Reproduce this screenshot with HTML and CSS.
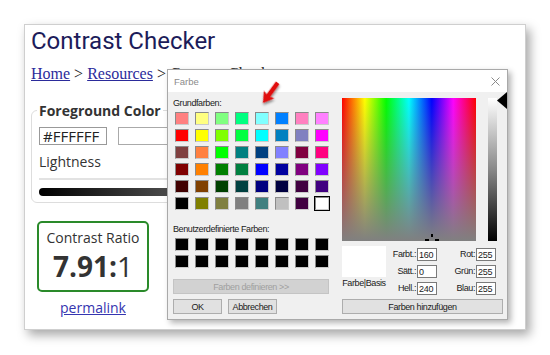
FILE: index.html
```html
<!DOCTYPE html>
<html lang="de">

<head>
  <meta charset="UTF-8" />
  <meta name="viewport" content="width=device-width, initial-scale=1.0" />
  <title>Contrast Checker</title>
  <link rel="stylesheet" href="styles.css">
</head>

<body>

  <div class="page">
    <h1>Contrast Checker</h1>
    <p class="crumbs"><a href="#">Home</a> &gt; <a href="#">Resources</a> &gt; Contrast Checker</p>

    <fieldset class="color-set">
      <legend>Foreground Color</legend>
      <div class="fields-row">
        <input type="text" class="hex-input" value="#FFFFFF" />
        <input type="text" class="picker-input" value="" />
      </div>
      <div class="lightness-label">Lightness</div>
      <div class="track"></div>
      <div class="lightness-bar"></div>
    </fieldset>

    <div class="ratio-box">
      <div class="ratio-title">Contrast Ratio</div>
      <div class="ratio-value"><b>7.91:</b>1</div>
    </div>
    <div class="permalink-row"><a href="#">permalink</a></div>

    <!-- Windows color dialog over the page -->
    <div class="dialog">
      <div class="dialog-title">
        <span>Farbe</span>
        <svg width="9" height="9" viewBox="0 0 9 9"><path d="M0.5 0.5L8.5 8.5M8.5 0.5L0.5 8.5" stroke="#8a8a8a" stroke-width="1" fill="none"/></svg>
      </div>
      <div class="dialog-body">
        <div class="dialog-left">
          <div class="dlg-label">Grundfarben:</div>
          <div class="swatches" id="basic-colors"></div>
          <div class="dlg-label custom-label">Benutzerdefinierte Farben:</div>
          <div class="swatches" id="custom-colors"></div>
          <button class="btn btn-define" disabled>Farben definieren &gt;&gt;</button>
          <div class="btn-row">
            <button class="btn btn-small">OK</button>
            <button class="btn btn-small">Abbrechen</button>
          </div>
        </div>

        <div class="dialog-right">
          <div class="spectrum-row">
            <div class="spectrum">
              <svg class="crosshair" width="16" height="10" viewBox="0 0 16 10">
                <rect x="7" y="0" width="2" height="3" fill="#000"/>
                <rect x="1" y="5" width="4" height="2" fill="#000"/>
                <rect x="11" y="5" width="4" height="2" fill="#000"/>
                <rect x="7" y="8" width="2" height="2" fill="#000"/>
              </svg>
            </div>
            <div class="lum-bar"></div>
            <svg class="lum-marker" width="10" height="17" viewBox="0 0 10 17"><path d="M0 8.5L10 0V17Z" fill="#000"/></svg>
          </div>

          <div class="values">
            <div class="preview-col">
              <div class="preview"></div>
              <div class="preview-label">Farbe|Basis</div>
            </div>
            <div class="value-grid">
              <span>Farbt.:</span><input type="text" value="160" /><span>Rot:</span><input type="text" value="255" />
              <span>Sätt.:</span><input type="text" value="0" /><span>Grün:</span><input type="text" value="255" />
              <span>Hell.:</span><input type="text" value="240" /><span>Blau:</span><input type="text" value="255" />
            </div>
          </div>

          <button class="btn btn-add">Farben hinzufügen</button>
        </div>
      </div>

      <svg class="red-arrow" width="32" height="34" viewBox="0 0 32 34">
        <defs>
          <filter id="sombra" x="-50%" y="-50%" width="200%" height="200%">
            <feDropShadow dx="1.5" dy="1.5" stdDeviation="1" flood-color="#000" flood-opacity="0.45"/>
          </filter>
        </defs>
        <g transform="translate(6,27) rotate(36)" filter="url(#sombra)">
          <path d="M0 0L-6.5 -10.5L-2.2 -9.3L-2.2 -25L2.2 -25L2.2 -9.3L6.5 -10.5Z" fill="#e01010"/>
        </g>
      </svg>
    </div>
  </div>

  <script>
    // Standard colors of the dialog
    const basicColors = [
      "#FF8080", "#FFFF80", "#80FF80", "#00FF80", "#80FFFF", "#0080FF", "#FF80C0", "#FF80FF",
      "#FF0000", "#FFFF00", "#80FF00", "#00FF40", "#00FFFF", "#0080C0", "#8080C0", "#FF00FF",
      "#804040", "#FF8040", "#00FF00", "#008080", "#004080", "#8080FF", "#800040", "#FF0080",
      "#800000", "#FF8000", "#008000", "#008040", "#0000FF", "#0000A0", "#800080", "#8000FF",
      "#400000", "#804000", "#004000", "#004040", "#000080", "#000040", "#400040", "#400080",
      "#000000", "#808000", "#808040", "#808080", "#408080", "#C0C0C0", "#400040", "#FFFFFF"
    ];

    const basicGrid = document.getElementById("basic-colors");
    const customGrid = document.getElementById("custom-colors");

    basicColors.forEach((cor, index) => {
      const div = document.createElement("div");
      div.classList.add("swatch");
      if (index === basicColors.length - 1) div.classList.add("selected");
      div.style.background = cor;
      basicGrid.appendChild(div);
    });

    for (let i = 0; i < 16; i++) {
      const div = document.createElement("div");
      div.classList.add("swatch", "swatch-custom");
      customGrid.appendChild(div);
    }
  </script>
</body>

</html>
```

FILE: styles.css
```css
* {
  box-sizing: border-box;
}

body {
  margin: 0;
  width: 550px;
  height: 355px;
  overflow: hidden;
  background-color: #fff;
  padding: 24px 0 0 24px;
}

/* Page behind the dialog */
.page {
  position: relative;
  width: 502px;
  height: 306px;
  padding: 0 6px;
  background-color: #fff;
  border: 1px solid #cfcfcf;
  box-shadow: 4px 5px 10px rgba(0, 0, 0, 0.35);
  font-family: 'Open Sans', sans-serif;
  color: #333;
}

.page h1 {
  margin: 2px 0 0;
  font-family: Roboto, sans-serif;
  font-weight: 400;
  font-size: 24px;
  line-height: 28px;
  color: #1c1c5a;
}

.crumbs {
  margin: 10px 0 0;
  font-family: 'Liberation Serif', serif;
  font-size: 16px;
  line-height: 18px;
  color: #222;
  white-space: nowrap;
}

.crumbs a {
  color: #2b2b9b;
}

.color-set {
  margin: 18px 0 0;
  width: 460px;
  min-width: 0;
  padding: 0 7px 6px;
  border: 1px solid #ddd;
  border-radius: 6px;
}

.color-set legend {
  margin-left: -2px;
  padding: 0 2px;
  font-weight: 700;
  font-size: 14px;
  line-height: 19px;
}

.fields-row {
  display: flex;
  margin-top: 7px;
}

.fields-row input {
  height: 18px;
  margin: 0;
  padding: 0 3px;
  border: 1px solid #999;
  font-family: 'Open Sans', sans-serif;
  font-size: 15px;
  color: #222;
}

.hex-input {
  width: 68px;
}

.picker-input {
  width: 300px;
  margin-left: 11px !important;
  border-color: #aaa !important;
}

.lightness-label {
  margin-top: 7px;
  font-size: 14px;
  line-height: 20px;
}

.track {
  margin-top: 6px;
  height: 2px;
  background-color: #e2e2e2;
}

.lightness-bar {
  margin-top: 8px;
  height: 8px;
  border-radius: 4px;
  background: linear-gradient(to right, #000, #fff);
}

.ratio-box {
  margin: 18px 0 0 6px;
  width: 112px;
  height: 71px;
  padding-top: 5px;
  border: 2px solid #2a8a2a;
  border-radius: 5px;
  text-align: center;
}

.ratio-title {
  font-size: 14px;
  line-height: 19px;
}

.ratio-value {
  margin-top: 3px;
  font-size: 28px;
  line-height: 32px;
}

.permalink-row {
  margin: 6px 0 0 6px;
  width: 112px;
  text-align: center;
  font-size: 14px;
  line-height: 19px;
}

.permalink-row a {
  color: #3535b0;
}

/* Color dialog */
.dialog {
  position: absolute;
  left: 142px;
  top: 44px;
  width: 341px;
  height: 251px;
  background-color: #f0f0f0;
  border: 1px solid #a9a9a9;
  box-shadow: 3px 3px 6px rgba(0, 0, 0, 0.3);
  font-family: 'Liberation Sans', Arial, sans-serif;
  font-size: 9px;
  letter-spacing: -0.4px;
  color: #1a1a1a;
}

.dialog-title {
  height: 22px;
  display: flex;
  align-items: center;
  justify-content: space-between;
  padding: 0 7px 0 6px;
  background-color: #fff;
  font-size: 9.5px;
  letter-spacing: 0;
  color: #8c8c8c;
}

.dialog-body {
  display: flex;
  padding-top: 6px;
}

.dialog-left {
  width: 174px;
  padding-left: 5px;
}

.dlg-label {
  line-height: 10px;
  white-space: nowrap;
}

.custom-label {
  margin-top: 14px;
}

.swatches {
  display: grid;
  grid-template-columns: repeat(8, 14px);
  grid-auto-rows: 13px;
  column-gap: 6px;
  row-gap: 4px;
  margin: 4px 0 0 2px;
}

.swatch {
  border: 1px solid;
  border-color: #8a8a8a #cacaca #cacaca #8a8a8a;
}

.swatch-custom {
  background-color: #000;
}

.swatch.selected {
  outline: 1px solid #000;
  outline-offset: 0;
}

.btn {
  display: block;
  height: 15px;
  margin: 0;
  padding: 0;
  background-color: #e1e1e1;
  border: 1px solid #adadad;
  font-family: 'Liberation Sans', Arial, sans-serif;
  font-size: 9px;
  letter-spacing: -0.4px;
  color: #1a1a1a;
}

.btn-define {
  width: 156px;
  margin-top: 11px;
}

.btn:disabled {
  background-color: #d2d2d2;
  border-color: #c4c4c4;
  color: #a0a0a0;
}

.btn-row {
  display: flex;
  gap: 6px;
  margin-top: 5px;
}

.btn-small {
  width: 49px;
}

.dialog-right {
  width: 165px;
}

.spectrum-row {
  display: flex;
  align-items: flex-start;
}

.spectrum {
  position: relative;
  width: 134px;
  height: 143px;
  overflow: hidden;
  background:
    linear-gradient(to bottom, rgba(128, 128, 128, 0), #808080),
    linear-gradient(to right, #f00, #ff0 17%, #0f0 33%, #0ff 50%, #00f 67%, #f0f 83%, #f00);
}

.crosshair {
  position: absolute;
  left: 82px;
  bottom: -3px;
}

.lum-bar {
  width: 9px;
  height: 143px;
  margin-left: 12px;
  background: linear-gradient(to bottom, #fff, #888 50%, #000);
}

.lum-marker {
  margin-top: -6px;
}

.values {
  display: flex;
  margin-top: 5px;
}

.preview-col {
  width: 44px;
}

.preview {
  height: 31px;
  background-color: #fff;
}

.preview-label {
  margin-top: 1px;
  line-height: 10px;
  text-align: center;
  white-space: nowrap;
}

.value-grid {
  display: grid;
  grid-template-columns: 31px 20px 39px 20px;
  grid-auto-rows: 13px;
  row-gap: 4px;
  margin-top: 2px;
}

.value-grid span {
  text-align: right;
  line-height: 13px;
  padding-right: 1px;
}

.value-grid input {
  width: 20px;
  height: 13px;
  margin: 0;
  padding: 0 1px;
  background-color: #fff;
  border: 1px solid #7a7a7a;
  font-family: 'Liberation Sans', Arial, sans-serif;
  font-size: 9px;
  letter-spacing: -0.3px;
  color: #1a1a1a;
}

.btn-add {
  width: 161px;
  margin-top: 4px;
}

.red-arrow {
  position: absolute;
  left: 89px;
  top: 6px;
}
```
